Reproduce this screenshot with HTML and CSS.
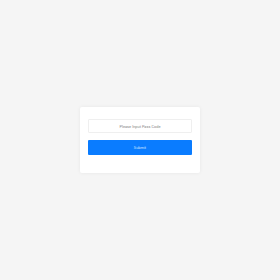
FILE: index.html
```html
<html>
<head>
	<meta charset="utf-8">
	<title>Pass Code</title>
	<link rel="stylesheet" href="styles.css">
</head>
<body>

	<div class="box">
		<input class="code" type="text" placeholder="Please Input Pass Code">
		<button class="submit">Submit</button>
	</div>

</body>
</html>
```

FILE: styles.css
```css
* {
	margin: 0;
	padding: 0;
	box-sizing: border-box;
}

html, body {
	height: 100%;
}

body {
	font-family: Roboto, "Liberation Sans", sans-serif;
	background: #f5f5f5;
	display: flex;
	align-items: center;
	justify-content: center;
}

.box {
	width: 120px;
	padding: 12px 8px 18px;
	background: #fff;
	border-radius: 2px;
	box-shadow: 0 0 4px rgba(0, 0, 0, .06);
	display: flex;
	flex-direction: column;
	gap: 7px;
}

.code {
	height: 14px;
	border: 1px solid #efefef;
	border-radius: 1px;
	font: 3.9px Roboto, "Liberation Sans", sans-serif;
	text-align: center;
	color: #333;
	outline: none;
}

.code::placeholder {
	color: #888;
}

.submit {
	height: 15px;
	border: none;
	border-radius: 1px;
	background: #0a7cff;
	color: #d6e8ff;
	font: 3.9px Roboto, "Liberation Sans", sans-serif;
}
```
